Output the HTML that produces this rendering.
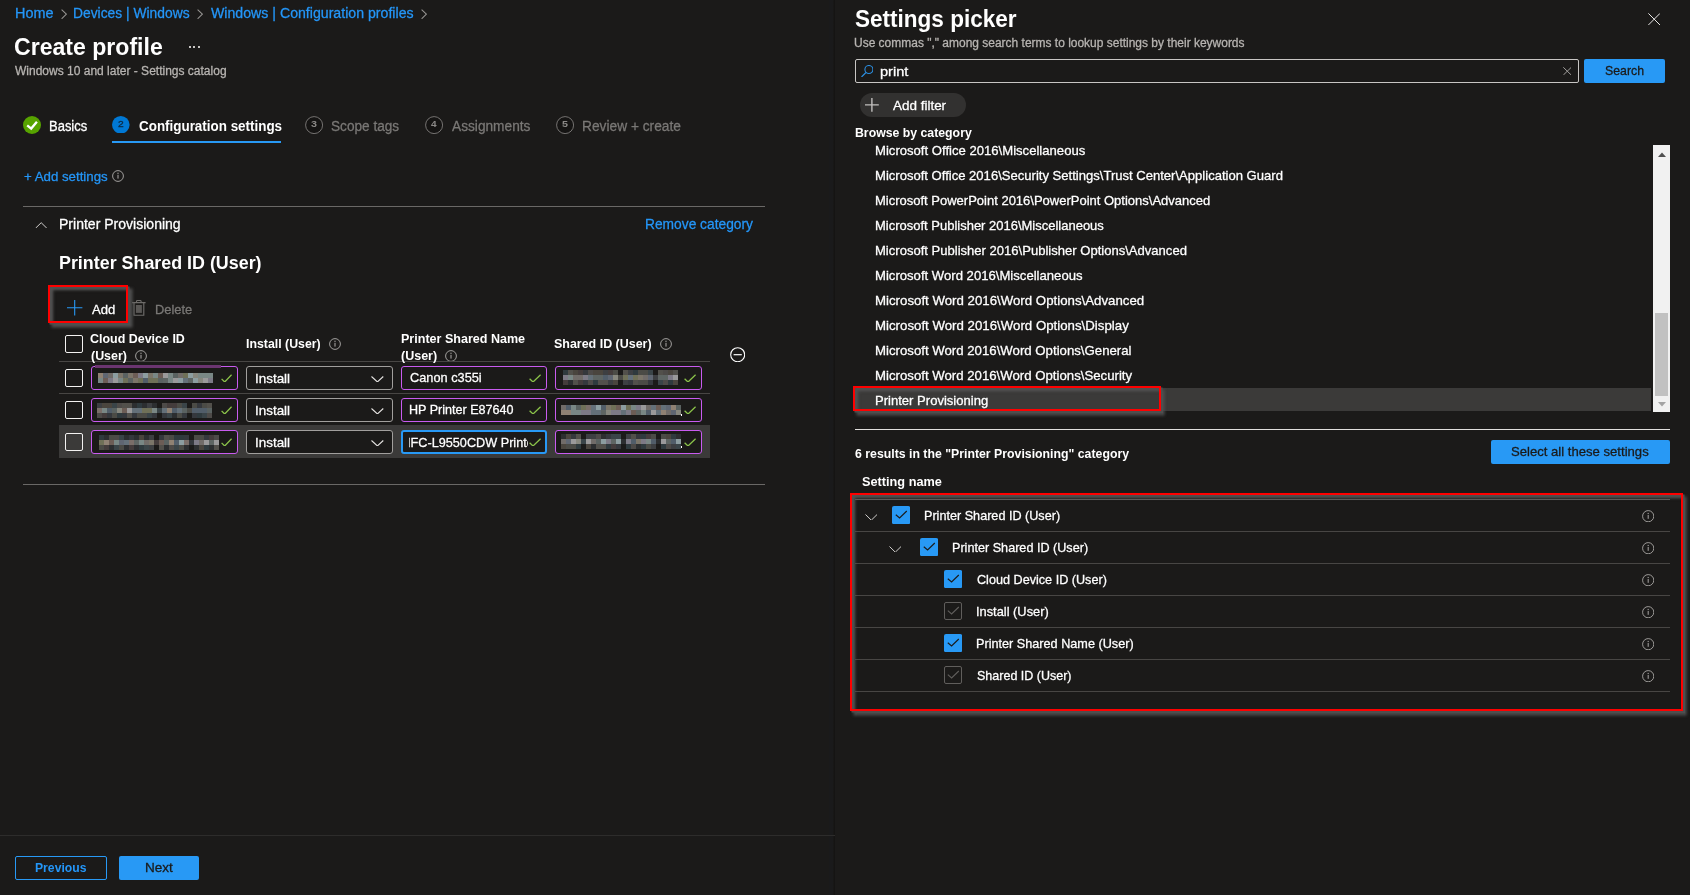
<!DOCTYPE html>
<html lang="en"><head><meta charset="utf-8"><title>Create profile - Settings picker</title>
<style>
html,body{margin:0;padding:0;}
body{width:1690px;height:895px;overflow:hidden;background:#1b1a19;font-family:"Liberation Sans", sans-serif;position:relative;}
.t{position:absolute;white-space:nowrap;line-height:1;transform-origin:0 50%;display:inline-block;}
.b{position:absolute;display:block;}
#tx{position:absolute;left:0;top:0;width:1690px;height:895px;will-change:transform;-webkit-text-stroke:0.28px;}
.red{border:2.4px solid #ff0000;box-sizing:border-box;box-shadow:1.5px 1.5px 0 #4e4e4e,3.6px 3.6px 3px 0.9px #505050,inset 3.2px 3.2px 2.6px #525252;}
#clip{position:absolute;left:409.4px;top:432px;width:118.6px;height:20px;overflow:hidden;}
#clip span{position:absolute;left:-8.931px;top:3.6px;font-size:13px;color:#fff;white-space:nowrap;line-height:1;transform-origin:0 50%;display:inline-block;transform:scaleX(0.9748);}
</style></head><body>
<svg class="b" style="left:61.0px;top:8.8px;" width="6" height="10.4" viewBox="0 0 6 10.4" fill="none"><path d="M0.6 0.6 L5.40 5.20 L0.6 9.80" stroke="#979593" stroke-width="1.05"/></svg>
<svg class="b" style="left:197.4px;top:8.8px;" width="6" height="10.4" viewBox="0 0 6 10.4" fill="none"><path d="M0.6 0.6 L5.40 5.20 L0.6 9.80" stroke="#979593" stroke-width="1.05"/></svg>
<svg class="b" style="left:421.4px;top:8.8px;" width="6" height="10.4" viewBox="0 0 6 10.4" fill="none"><path d="M0.6 0.6 L5.40 5.20 L0.6 9.80" stroke="#979593" stroke-width="1.05"/></svg>
<div class="b" style="left:188.7px;top:46px;width:1.9px;height:2.2px;background:#c8c6c4;"></div>
<div class="b" style="left:193.1px;top:46px;width:1.9px;height:2.2px;background:#c8c6c4;"></div>
<div class="b" style="left:197.7px;top:46px;width:1.9px;height:2.2px;background:#c8c6c4;"></div>
<svg class="b" style="left:23px;top:115.6px;" width="18" height="18" viewBox="0 0 18 18" fill="none"><circle cx="9" cy="9" r="9" fill="#57a300"/><path d="M4.2 9.3 L8.2 12.6 L13.9 5.8" stroke="#fff" stroke-width="2.3"/></svg>
<svg class="b" style="left:112.2px;top:115.8px;" width="17.6" height="17.6" viewBox="0 0 17.6 17.6" fill="none"><circle cx="8.8" cy="8.8" r="8.8" fill="#0078d4"/></svg>
<svg class="b" style="left:304.9px;top:115.6px;" width="18.2" height="18.2" viewBox="0 0 18.2 18.2" fill="none"><circle cx="9.1" cy="9.1" r="8.5" stroke="#767472" stroke-width="1" fill="#151413"/></svg>
<svg class="b" style="left:424.79999999999995px;top:115.6px;" width="18.2" height="18.2" viewBox="0 0 18.2 18.2" fill="none"><circle cx="9.1" cy="9.1" r="8.5" stroke="#767472" stroke-width="1" fill="#151413"/></svg>
<svg class="b" style="left:555.8px;top:115.6px;" width="18.2" height="18.2" viewBox="0 0 18.2 18.2" fill="none"><circle cx="9.1" cy="9.1" r="8.5" stroke="#767472" stroke-width="1" fill="#151413"/></svg>
<div class="b" style="left:112px;top:140.8px;width:169px;height:2.4px;background:#2899f5;"></div>
<svg class="b" style="left:112.0px;top:170.4px;" width="12" height="12" viewBox="0 0 12 12" fill="none"><circle cx="6.0" cy="6.0" r="5.4" stroke="#a19f9d" stroke-width="1"/><rect x="5.45" y="4.8" width="1.1" height="3.8" fill="#a19f9d"/><rect x="5.4" y="2.7" width="1.2" height="1.2" fill="#a19f9d"/></svg>
<div class="b" style="left:23px;top:206px;width:742px;height:1px;background:#6a6866;"></div>
<div class="b" style="left:23px;top:484px;width:742px;height:1px;background:#6a6866;"></div>
<svg class="b" style="left:34.9px;top:221.6px;" width="12.4" height="6.8" viewBox="0 0 12.4 6.8" fill="none"><path d="M0.5 6.30 L6.20 0.7 L11.90 6.30" stroke="#d2d0ce" stroke-width="1.0"/></svg>
<svg class="b" style="left:67.3px;top:300.3px;" width="15.4" height="15.4" viewBox="0 0 15.4 15.4" fill="none"><path d="M7.7 0 V15.4 M0 7.7 H15.4" stroke="#2899f5" stroke-width="1.1"/></svg>
<svg class="b" style="left:132.3px;top:300px;" width="13.8" height="16.2" viewBox="0 0 13.8 16.2" fill="none"><path d="M0 2.6 H13.6 M4.5 2.5 V1.3 Q4.5 0.55 5.3 0.55 H8.3 Q9.1 0.55 9.1 1.3 V2.5 M2 2.8 V15.3 H11.8 V2.8" stroke="#6e6c6a" stroke-width="1.15"/><rect x="3.9" y="5" width="6" height="7.9" fill="#5a5856"/></svg>
<div class="b red" style="left:48px;top:285px;width:80px;height:38px;"></div>
<div class="b" style="left:64.9px;top:334.8px;width:18.2px;height:18.2px;border:1.35px solid #f3f2f1;border-radius:2px;box-sizing:border-box;"></div>
<svg class="b" style="left:134.9px;top:349.8px;" width="12" height="12" viewBox="0 0 12 12" fill="none"><circle cx="6.0" cy="6.0" r="5.4" stroke="#a19f9d" stroke-width="1"/><rect x="5.45" y="4.8" width="1.1" height="3.8" fill="#a19f9d"/><rect x="5.4" y="2.7" width="1.2" height="1.2" fill="#a19f9d"/></svg>
<svg class="b" style="left:329.0px;top:338.0px;" width="12" height="12" viewBox="0 0 12 12" fill="none"><circle cx="6.0" cy="6.0" r="5.4" stroke="#a19f9d" stroke-width="1"/><rect x="5.45" y="4.8" width="1.1" height="3.8" fill="#a19f9d"/><rect x="5.4" y="2.7" width="1.2" height="1.2" fill="#a19f9d"/></svg>
<svg class="b" style="left:445.0px;top:350.0px;" width="12" height="12" viewBox="0 0 12 12" fill="none"><circle cx="6.0" cy="6.0" r="5.4" stroke="#a19f9d" stroke-width="1"/><rect x="5.45" y="4.8" width="1.1" height="3.8" fill="#a19f9d"/><rect x="5.4" y="2.7" width="1.2" height="1.2" fill="#a19f9d"/></svg>
<svg class="b" style="left:660.0px;top:338.0px;" width="12" height="12" viewBox="0 0 12 12" fill="none"><circle cx="6.0" cy="6.0" r="5.4" stroke="#a19f9d" stroke-width="1"/><rect x="5.45" y="4.8" width="1.1" height="3.8" fill="#a19f9d"/><rect x="5.4" y="2.7" width="1.2" height="1.2" fill="#a19f9d"/></svg>
<div class="b" style="left:59px;top:361px;width:651px;height:1px;background:#484644;"></div>
<div class="b" style="left:59px;top:393px;width:651px;height:1px;background:#484644;"></div>
<svg class="b" style="left:729.7px;top:346.7px;" width="15.4" height="15.4" viewBox="0 0 15.4 15.4" fill="none"><circle cx="7.7" cy="7.7" r="7" stroke="#fff" stroke-width="1.1"/><path d="M3.6 7.7 H11.8" stroke="#fff" stroke-width="1.2"/></svg>
<div class="b" style="left:59px;top:425px;width:651px;height:33px;background:#3b3a39;"></div>
<div class="b" style="left:64.9px;top:368.9px;width:18.2px;height:18.2px;border:1.35px solid #f3f2f1;border-radius:2px;box-sizing:border-box;"></div>
<div class="b" style="left:91px;top:366px;width:147px;height:24px;border:1px solid #c95bf0;border-radius:3px;box-sizing:border-box;background:#1b1a19;"></div>
<svg class="b" style="left:220.7px;top:373.6px;" width="11.2" height="8.8" viewBox="0 0 11.2 8.8" fill="none"><path d="M0.6 4.84 L3.70 8.00 L10.60 0.8" stroke="#8bc34a" stroke-width="1.3"/></svg>
<div class="b" style="left:246px;top:366px;width:147px;height:24px;border:1px solid #a19f9d;border-radius:3px;box-sizing:border-box;background:#1b1a19;"></div>
<svg class="b" style="left:371.20000000000005px;top:375.5px;" width="12.8" height="6.6" viewBox="0 0 12.8 6.6" fill="none"><path d="M0.5 0.5 L6.40 6.00 L12.30 0.5" stroke="#e6e4e2" stroke-width="1.05"/></svg>
<div class="b" style="left:401px;top:366px;width:146px;height:24px;border:1px solid #c95bf0;border-radius:3px;box-sizing:border-box;background:#1b1a19;"></div>
<svg class="b" style="left:528.7px;top:373.6px;" width="12.2" height="8.8" viewBox="0 0 12.2 8.8" fill="none"><path d="M0.6 4.84 L4.03 8.00 L11.60 0.8" stroke="#8bc34a" stroke-width="1.3"/></svg>
<div class="b" style="left:555px;top:366px;width:147px;height:24px;border:1px solid #c95bf0;border-radius:3px;box-sizing:border-box;background:#1b1a19;"></div>
<svg class="b" style="left:684px;top:373.6px;" width="12.2" height="8.8" viewBox="0 0 12.2 8.8" fill="none"><path d="M0.6 4.84 L4.03 8.00 L11.60 0.8" stroke="#8bc34a" stroke-width="1.3"/></svg>
<div class="b" style="left:64.9px;top:400.9px;width:18.2px;height:18.2px;border:1.35px solid #f3f2f1;border-radius:2px;box-sizing:border-box;"></div>
<div class="b" style="left:91px;top:398px;width:147px;height:24px;border:1px solid #c95bf0;border-radius:3px;box-sizing:border-box;background:#1b1a19;"></div>
<svg class="b" style="left:220.7px;top:405.6px;" width="11.2" height="8.8" viewBox="0 0 11.2 8.8" fill="none"><path d="M0.6 4.84 L3.70 8.00 L10.60 0.8" stroke="#8bc34a" stroke-width="1.3"/></svg>
<div class="b" style="left:246px;top:398px;width:147px;height:24px;border:1px solid #a19f9d;border-radius:3px;box-sizing:border-box;background:#1b1a19;"></div>
<svg class="b" style="left:371.20000000000005px;top:407.5px;" width="12.8" height="6.6" viewBox="0 0 12.8 6.6" fill="none"><path d="M0.5 0.5 L6.40 6.00 L12.30 0.5" stroke="#e6e4e2" stroke-width="1.05"/></svg>
<div class="b" style="left:401px;top:398px;width:146px;height:24px;border:1px solid #c95bf0;border-radius:3px;box-sizing:border-box;background:#1b1a19;"></div>
<svg class="b" style="left:528.7px;top:405.6px;" width="12.2" height="8.8" viewBox="0 0 12.2 8.8" fill="none"><path d="M0.6 4.84 L4.03 8.00 L11.60 0.8" stroke="#8bc34a" stroke-width="1.3"/></svg>
<div class="b" style="left:555px;top:398px;width:147px;height:24px;border:1px solid #c95bf0;border-radius:3px;box-sizing:border-box;background:#1b1a19;"></div>
<svg class="b" style="left:684px;top:405.6px;" width="12.2" height="8.8" viewBox="0 0 12.2 8.8" fill="none"><path d="M0.6 4.84 L4.03 8.00 L11.60 0.8" stroke="#8bc34a" stroke-width="1.3"/></svg>
<div class="b" style="left:64.9px;top:432.9px;width:18.2px;height:18.2px;border:1.35px solid #f3f2f1;border-radius:2px;box-sizing:border-box;background:#3b3a39;"></div>
<div class="b" style="left:91px;top:430px;width:147px;height:24px;border:1px solid #c95bf0;border-radius:3px;box-sizing:border-box;background:#1b1a19;"></div>
<svg class="b" style="left:220.7px;top:437.6px;" width="11.2" height="8.8" viewBox="0 0 11.2 8.8" fill="none"><path d="M0.6 4.84 L3.70 8.00 L10.60 0.8" stroke="#8bc34a" stroke-width="1.3"/></svg>
<div class="b" style="left:246px;top:430px;width:147px;height:24px;border:1px solid #a19f9d;border-radius:3px;box-sizing:border-box;background:#1b1a19;"></div>
<svg class="b" style="left:371.20000000000005px;top:439.5px;" width="12.8" height="6.6" viewBox="0 0 12.8 6.6" fill="none"><path d="M0.5 0.5 L6.40 6.00 L12.30 0.5" stroke="#e6e4e2" stroke-width="1.05"/></svg>
<div class="b" style="left:401px;top:430px;width:146px;height:24px;border:2px solid #2899f5;border-radius:3px;box-sizing:border-box;background:#1b1a19;"></div>
<svg class="b" style="left:528.7px;top:437.6px;" width="12.2" height="8.8" viewBox="0 0 12.2 8.8" fill="none"><path d="M0.6 4.84 L4.03 8.00 L11.60 0.8" stroke="#8bc34a" stroke-width="1.3"/></svg>
<div class="b" style="left:555px;top:430px;width:147px;height:24px;border:1px solid #c95bf0;border-radius:3px;box-sizing:border-box;background:#1b1a19;"></div>
<svg class="b" style="left:684px;top:437.6px;" width="12.2" height="8.8" viewBox="0 0 12.2 8.8" fill="none"><path d="M0.6 4.84 L4.03 8.00 L11.60 0.8" stroke="#8bc34a" stroke-width="1.3"/></svg>
<div class="b" style="left:95px;top:365px;width:126px;height:3px;background:#6b3570;"></div>
<div class="b" style="left:98px;top:373px;width:5px;height:5px;background:#8f8173;"></div><div class="b" style="left:103px;top:373px;width:5px;height:5px;background:#5f6672;"></div><div class="b" style="left:108px;top:373px;width:5px;height:5px;background:#716c69;"></div><div class="b" style="left:113px;top:373px;width:5px;height:5px;background:#8c9da0;"></div><div class="b" style="left:118px;top:373px;width:5px;height:5px;background:#7b7569;"></div><div class="b" style="left:123px;top:373px;width:5px;height:5px;background:#5a6261;"></div><div class="b" style="left:128px;top:373px;width:5px;height:5px;background:#7b7569;"></div><div class="b" style="left:133px;top:373px;width:5px;height:5px;background:#6c5d56;"></div><div class="b" style="left:138px;top:373px;width:5px;height:5px;background:#7d7a86;"></div><div class="b" style="left:143px;top:373px;width:5px;height:5px;background:#8c9da0;"></div><div class="b" style="left:148px;top:373px;width:5px;height:5px;background:#7b7569;"></div><div class="b" style="left:153px;top:373px;width:5px;height:5px;background:#798785;"></div><div class="b" style="left:158px;top:373px;width:5px;height:5px;background:#6c5d56;"></div><div class="b" style="left:163px;top:373px;width:5px;height:5px;background:#9a999a;"></div><div class="b" style="left:168px;top:373px;width:5px;height:5px;background:#798785;"></div><div class="b" style="left:173px;top:373px;width:5px;height:5px;background:#5a6261;"></div><div class="b" style="left:178px;top:373px;width:5px;height:5px;background:#716c69;"></div><div class="b" style="left:183px;top:373px;width:5px;height:5px;background:#6f7058;"></div><div class="b" style="left:188px;top:373px;width:5px;height:5px;background:#8c9da0;"></div><div class="b" style="left:193px;top:373px;width:5px;height:5px;background:#87877e;"></div><div class="b" style="left:198px;top:373px;width:5px;height:5px;background:#798785;"></div><div class="b" style="left:203px;top:373px;width:5px;height:5px;background:#798785;"></div><div class="b" style="left:208px;top:373px;width:5px;height:5px;background:#798785;"></div><div class="b" style="left:98px;top:378px;width:5px;height:5px;background:#798785;"></div><div class="b" style="left:103px;top:378px;width:5px;height:5px;background:#6c5d56;"></div><div class="b" style="left:108px;top:378px;width:5px;height:5px;background:#7d7a86;"></div><div class="b" style="left:113px;top:378px;width:5px;height:5px;background:#9a999a;"></div><div class="b" style="left:118px;top:378px;width:5px;height:5px;background:#798785;"></div><div class="b" style="left:123px;top:378px;width:5px;height:5px;background:#6f7058;"></div><div class="b" style="left:128px;top:378px;width:5px;height:5px;background:#5a6261;"></div><div class="b" style="left:133px;top:378px;width:5px;height:5px;background:#7b7569;"></div><div class="b" style="left:138px;top:378px;width:5px;height:5px;background:#6f7058;"></div><div class="b" style="left:143px;top:378px;width:5px;height:5px;background:#515d69;"></div><div class="b" style="left:148px;top:378px;width:5px;height:5px;background:#6f7058;"></div><div class="b" style="left:153px;top:378px;width:5px;height:5px;background:#6f7058;"></div><div class="b" style="left:158px;top:378px;width:5px;height:5px;background:#5a6261;"></div><div class="b" style="left:163px;top:378px;width:5px;height:5px;background:#5e6563;"></div><div class="b" style="left:168px;top:378px;width:5px;height:5px;background:#798785;"></div><div class="b" style="left:173px;top:378px;width:5px;height:5px;background:#9a999a;"></div><div class="b" style="left:178px;top:378px;width:5px;height:5px;background:#8c9da0;"></div><div class="b" style="left:183px;top:378px;width:5px;height:5px;background:#647079;"></div><div class="b" style="left:188px;top:378px;width:5px;height:5px;background:#5e6563;"></div><div class="b" style="left:193px;top:378px;width:5px;height:5px;background:#8c9da0;"></div><div class="b" style="left:198px;top:378px;width:5px;height:5px;background:#87877e;"></div><div class="b" style="left:203px;top:378px;width:5px;height:5px;background:#9a999a;"></div><div class="b" style="left:208px;top:378px;width:5px;height:5px;background:#7d7a86;"></div>
<div class="b" style="left:97px;top:403px;width:5px;height:5px;background:#3d3f42;"></div><div class="b" style="left:102px;top:403px;width:5px;height:5px;background:#4a453e;"></div><div class="b" style="left:107px;top:403px;width:5px;height:5px;background:#4a453e;"></div><div class="b" style="left:112px;top:403px;width:5px;height:5px;background:#3a4448;"></div><div class="b" style="left:117px;top:403px;width:5px;height:5px;background:#4d4a48;"></div><div class="b" style="left:122px;top:403px;width:5px;height:5px;background:#52504b;"></div><div class="b" style="left:127px;top:403px;width:5px;height:5px;background:#52504b;"></div><div class="b" style="left:132px;top:403px;width:5px;height:5px;background:#2c2e30;"></div><div class="b" style="left:137px;top:403px;width:5px;height:5px;background:#2f3a3e;"></div><div class="b" style="left:142px;top:403px;width:5px;height:5px;background:#2c2e30;"></div><div class="b" style="left:147px;top:403px;width:5px;height:5px;background:#3d3f42;"></div><div class="b" style="left:152px;top:403px;width:5px;height:5px;background:#2c2e30;"></div><div class="b" style="left:162px;top:403px;width:5px;height:5px;background:#4d4a48;"></div><div class="b" style="left:167px;top:403px;width:5px;height:5px;background:#443c3c;"></div><div class="b" style="left:172px;top:403px;width:5px;height:5px;background:#443c3c;"></div><div class="b" style="left:177px;top:403px;width:5px;height:5px;background:#4b4b46;"></div><div class="b" style="left:182px;top:403px;width:5px;height:5px;background:#3a4448;"></div><div class="b" style="left:192px;top:403px;width:5px;height:5px;background:#4b4b46;"></div><div class="b" style="left:197px;top:403px;width:5px;height:5px;background:#35383d;"></div><div class="b" style="left:202px;top:403px;width:5px;height:5px;background:#4b4b46;"></div><div class="b" style="left:207px;top:403px;width:5px;height:5px;background:#52504b;"></div><div class="b" style="left:97px;top:408px;width:5px;height:5px;background:#7a6e69;"></div><div class="b" style="left:102px;top:408px;width:5px;height:5px;background:#798785;"></div><div class="b" style="left:107px;top:408px;width:5px;height:5px;background:#515d69;"></div><div class="b" style="left:112px;top:408px;width:5px;height:5px;background:#5a6261;"></div><div class="b" style="left:117px;top:408px;width:5px;height:5px;background:#87877e;"></div><div class="b" style="left:122px;top:408px;width:5px;height:5px;background:#6c5d56;"></div><div class="b" style="left:127px;top:408px;width:5px;height:5px;background:#9a999a;"></div><div class="b" style="left:132px;top:408px;width:5px;height:5px;background:#647079;"></div><div class="b" style="left:137px;top:408px;width:5px;height:5px;background:#647079;"></div><div class="b" style="left:142px;top:408px;width:5px;height:5px;background:#6f7058;"></div><div class="b" style="left:147px;top:408px;width:5px;height:5px;background:#6f7058;"></div><div class="b" style="left:152px;top:408px;width:5px;height:5px;background:#798785;"></div><div class="b" style="left:157px;top:408px;width:5px;height:5px;background:#3a4448;"></div><div class="b" style="left:162px;top:408px;width:5px;height:5px;background:#647079;"></div><div class="b" style="left:167px;top:408px;width:5px;height:5px;background:#8f8173;"></div><div class="b" style="left:172px;top:408px;width:5px;height:5px;background:#515d69;"></div><div class="b" style="left:177px;top:408px;width:5px;height:5px;background:#647079;"></div><div class="b" style="left:182px;top:408px;width:5px;height:5px;background:#5a6261;"></div><div class="b" style="left:187px;top:408px;width:5px;height:5px;background:#4b4b46;"></div><div class="b" style="left:192px;top:408px;width:5px;height:5px;background:#515d69;"></div><div class="b" style="left:197px;top:408px;width:5px;height:5px;background:#515d69;"></div><div class="b" style="left:202px;top:408px;width:5px;height:5px;background:#515d69;"></div><div class="b" style="left:207px;top:408px;width:5px;height:5px;background:#5a6261;"></div><div class="b" style="left:97px;top:413px;width:5px;height:5px;background:#4d4a48;"></div><div class="b" style="left:102px;top:413px;width:5px;height:5px;background:#443c3c;"></div><div class="b" style="left:107px;top:413px;width:5px;height:5px;background:#35383d;"></div><div class="b" style="left:112px;top:413px;width:5px;height:5px;background:#4b4b46;"></div><div class="b" style="left:117px;top:413px;width:5px;height:5px;background:#2f3a3e;"></div><div class="b" style="left:122px;top:413px;width:5px;height:5px;background:#35383d;"></div><div class="b" style="left:127px;top:413px;width:5px;height:5px;background:#52504b;"></div><div class="b" style="left:132px;top:413px;width:5px;height:5px;background:#35383d;"></div><div class="b" style="left:137px;top:413px;width:5px;height:5px;background:#4b4b46;"></div><div class="b" style="left:142px;top:413px;width:5px;height:5px;background:#4b4b46;"></div><div class="b" style="left:147px;top:413px;width:5px;height:5px;background:#3a4448;"></div><div class="b" style="left:152px;top:413px;width:5px;height:5px;background:#35383d;"></div><div class="b" style="left:162px;top:413px;width:5px;height:5px;background:#35383d;"></div><div class="b" style="left:167px;top:413px;width:5px;height:5px;background:#3a4448;"></div><div class="b" style="left:172px;top:413px;width:5px;height:5px;background:#2c2e30;"></div><div class="b" style="left:177px;top:413px;width:5px;height:5px;background:#4b4b46;"></div><div class="b" style="left:182px;top:413px;width:5px;height:5px;background:#35383d;"></div><div class="b" style="left:192px;top:413px;width:5px;height:5px;background:#35383d;"></div><div class="b" style="left:197px;top:413px;width:5px;height:5px;background:#2f3a3e;"></div><div class="b" style="left:202px;top:413px;width:5px;height:5px;background:#3a4448;"></div><div class="b" style="left:207px;top:413px;width:5px;height:5px;background:#4d4a48;"></div>
<div class="b" style="left:99px;top:435px;width:5px;height:5px;background:#2f3a3e;"></div><div class="b" style="left:104px;top:435px;width:5px;height:5px;background:#2c2e30;"></div><div class="b" style="left:109px;top:435px;width:5px;height:5px;background:#4b4b46;"></div><div class="b" style="left:114px;top:435px;width:5px;height:5px;background:#4d4a48;"></div><div class="b" style="left:119px;top:435px;width:5px;height:5px;background:#3a4448;"></div><div class="b" style="left:124px;top:435px;width:5px;height:5px;background:#2c2e30;"></div><div class="b" style="left:129px;top:435px;width:5px;height:5px;background:#35383d;"></div><div class="b" style="left:134px;top:435px;width:5px;height:5px;background:#2c2e30;"></div><div class="b" style="left:139px;top:435px;width:5px;height:5px;background:#4a453e;"></div><div class="b" style="left:144px;top:435px;width:5px;height:5px;background:#2c2e30;"></div><div class="b" style="left:149px;top:435px;width:5px;height:5px;background:#3d3f42;"></div><div class="b" style="left:159px;top:435px;width:5px;height:5px;background:#35383d;"></div><div class="b" style="left:164px;top:435px;width:5px;height:5px;background:#52504b;"></div><div class="b" style="left:169px;top:435px;width:5px;height:5px;background:#4b4b46;"></div><div class="b" style="left:174px;top:435px;width:5px;height:5px;background:#2f3a3e;"></div><div class="b" style="left:179px;top:435px;width:5px;height:5px;background:#2f3a3e;"></div><div class="b" style="left:184px;top:435px;width:5px;height:5px;background:#35383d;"></div><div class="b" style="left:194px;top:435px;width:5px;height:5px;background:#4b4b46;"></div><div class="b" style="left:199px;top:435px;width:5px;height:5px;background:#4b4b46;"></div><div class="b" style="left:204px;top:435px;width:5px;height:5px;background:#35383d;"></div><div class="b" style="left:209px;top:435px;width:5px;height:5px;background:#443c3c;"></div><div class="b" style="left:214px;top:435px;width:5px;height:5px;background:#4d4a48;"></div><div class="b" style="left:99px;top:440px;width:5px;height:5px;background:#6f7058;"></div><div class="b" style="left:104px;top:440px;width:5px;height:5px;background:#8f8173;"></div><div class="b" style="left:109px;top:440px;width:5px;height:5px;background:#6c5d56;"></div><div class="b" style="left:114px;top:440px;width:5px;height:5px;background:#798785;"></div><div class="b" style="left:119px;top:440px;width:5px;height:5px;background:#5f6672;"></div><div class="b" style="left:124px;top:440px;width:5px;height:5px;background:#647079;"></div><div class="b" style="left:129px;top:440px;width:5px;height:5px;background:#7a6e69;"></div><div class="b" style="left:134px;top:440px;width:5px;height:5px;background:#5e6563;"></div><div class="b" style="left:139px;top:440px;width:5px;height:5px;background:#798785;"></div><div class="b" style="left:144px;top:440px;width:5px;height:5px;background:#716c69;"></div><div class="b" style="left:149px;top:440px;width:5px;height:5px;background:#7b7569;"></div><div class="b" style="left:154px;top:440px;width:5px;height:5px;background:#443c3c;"></div><div class="b" style="left:159px;top:440px;width:5px;height:5px;background:#6c5d56;"></div><div class="b" style="left:164px;top:440px;width:5px;height:5px;background:#5a6261;"></div><div class="b" style="left:169px;top:440px;width:5px;height:5px;background:#8f8173;"></div><div class="b" style="left:174px;top:440px;width:5px;height:5px;background:#515d69;"></div><div class="b" style="left:179px;top:440px;width:5px;height:5px;background:#8c9da0;"></div><div class="b" style="left:184px;top:440px;width:5px;height:5px;background:#7a6e69;"></div><div class="b" style="left:189px;top:440px;width:5px;height:5px;background:#35383d;"></div><div class="b" style="left:194px;top:440px;width:5px;height:5px;background:#7d7a86;"></div><div class="b" style="left:199px;top:440px;width:5px;height:5px;background:#716c69;"></div><div class="b" style="left:204px;top:440px;width:5px;height:5px;background:#9a999a;"></div><div class="b" style="left:209px;top:440px;width:5px;height:5px;background:#5e6563;"></div><div class="b" style="left:214px;top:440px;width:5px;height:5px;background:#9a999a;"></div><div class="b" style="left:99px;top:445px;width:5px;height:5px;background:#4b4b46;"></div><div class="b" style="left:104px;top:445px;width:5px;height:5px;background:#443c3c;"></div><div class="b" style="left:109px;top:445px;width:5px;height:5px;background:#2c2e30;"></div><div class="b" style="left:114px;top:445px;width:5px;height:5px;background:#3a4448;"></div><div class="b" style="left:119px;top:445px;width:5px;height:5px;background:#4b4b46;"></div><div class="b" style="left:124px;top:445px;width:5px;height:5px;background:#2c2e30;"></div><div class="b" style="left:129px;top:445px;width:5px;height:5px;background:#443c3c;"></div><div class="b" style="left:134px;top:445px;width:5px;height:5px;background:#2c2e30;"></div><div class="b" style="left:139px;top:445px;width:5px;height:5px;background:#2f3a3e;"></div><div class="b" style="left:144px;top:445px;width:5px;height:5px;background:#3a4448;"></div><div class="b" style="left:149px;top:445px;width:5px;height:5px;background:#3d3f42;"></div><div class="b" style="left:159px;top:445px;width:5px;height:5px;background:#52504b;"></div><div class="b" style="left:164px;top:445px;width:5px;height:5px;background:#2c2e30;"></div><div class="b" style="left:169px;top:445px;width:5px;height:5px;background:#4d4a48;"></div><div class="b" style="left:174px;top:445px;width:5px;height:5px;background:#3a4448;"></div><div class="b" style="left:179px;top:445px;width:5px;height:5px;background:#4b4b46;"></div><div class="b" style="left:184px;top:445px;width:5px;height:5px;background:#2c2e30;"></div><div class="b" style="left:194px;top:445px;width:5px;height:5px;background:#2c2e30;"></div><div class="b" style="left:199px;top:445px;width:5px;height:5px;background:#4a453e;"></div><div class="b" style="left:204px;top:445px;width:5px;height:5px;background:#2f3a3e;"></div><div class="b" style="left:209px;top:445px;width:5px;height:5px;background:#2c2e30;"></div><div class="b" style="left:214px;top:445px;width:5px;height:5px;background:#52504b;"></div>
<div class="b" style="left:563px;top:370px;width:5px;height:5px;background:#2f3a3e;"></div><div class="b" style="left:568px;top:370px;width:5px;height:5px;background:#52504b;"></div><div class="b" style="left:573px;top:370px;width:5px;height:5px;background:#4a453e;"></div><div class="b" style="left:578px;top:370px;width:5px;height:5px;background:#443c3c;"></div><div class="b" style="left:583px;top:370px;width:5px;height:5px;background:#35383d;"></div><div class="b" style="left:588px;top:370px;width:5px;height:5px;background:#4d4a48;"></div><div class="b" style="left:593px;top:370px;width:5px;height:5px;background:#4a453e;"></div><div class="b" style="left:598px;top:370px;width:5px;height:5px;background:#4a453e;"></div><div class="b" style="left:603px;top:370px;width:5px;height:5px;background:#3d3f42;"></div><div class="b" style="left:608px;top:370px;width:5px;height:5px;background:#443c3c;"></div><div class="b" style="left:613px;top:370px;width:5px;height:5px;background:#4b4b46;"></div><div class="b" style="left:623px;top:370px;width:5px;height:5px;background:#52504b;"></div><div class="b" style="left:628px;top:370px;width:5px;height:5px;background:#3d3f42;"></div><div class="b" style="left:633px;top:370px;width:5px;height:5px;background:#2f3a3e;"></div><div class="b" style="left:638px;top:370px;width:5px;height:5px;background:#4b4b46;"></div><div class="b" style="left:643px;top:370px;width:5px;height:5px;background:#4b4b46;"></div><div class="b" style="left:648px;top:370px;width:5px;height:5px;background:#3a4448;"></div><div class="b" style="left:658px;top:370px;width:5px;height:5px;background:#52504b;"></div><div class="b" style="left:663px;top:370px;width:5px;height:5px;background:#4d4a48;"></div><div class="b" style="left:668px;top:370px;width:5px;height:5px;background:#4a453e;"></div><div class="b" style="left:673px;top:370px;width:5px;height:5px;background:#52504b;"></div><div class="b" style="left:563px;top:375px;width:5px;height:5px;background:#7d7a86;"></div><div class="b" style="left:568px;top:375px;width:5px;height:5px;background:#798785;"></div><div class="b" style="left:573px;top:375px;width:5px;height:5px;background:#716c69;"></div><div class="b" style="left:578px;top:375px;width:5px;height:5px;background:#716c69;"></div><div class="b" style="left:583px;top:375px;width:5px;height:5px;background:#7d7a86;"></div><div class="b" style="left:588px;top:375px;width:5px;height:5px;background:#647079;"></div><div class="b" style="left:593px;top:375px;width:5px;height:5px;background:#5e6563;"></div><div class="b" style="left:598px;top:375px;width:5px;height:5px;background:#5e6563;"></div><div class="b" style="left:603px;top:375px;width:5px;height:5px;background:#515d69;"></div><div class="b" style="left:608px;top:375px;width:5px;height:5px;background:#5f6672;"></div><div class="b" style="left:613px;top:375px;width:5px;height:5px;background:#87877e;"></div><div class="b" style="left:618px;top:375px;width:5px;height:5px;background:#4b4b46;"></div><div class="b" style="left:623px;top:375px;width:5px;height:5px;background:#6f7058;"></div><div class="b" style="left:628px;top:375px;width:5px;height:5px;background:#647079;"></div><div class="b" style="left:633px;top:375px;width:5px;height:5px;background:#6f7058;"></div><div class="b" style="left:638px;top:375px;width:5px;height:5px;background:#7b7569;"></div><div class="b" style="left:643px;top:375px;width:5px;height:5px;background:#716c69;"></div><div class="b" style="left:648px;top:375px;width:5px;height:5px;background:#5f6672;"></div><div class="b" style="left:653px;top:375px;width:5px;height:5px;background:#3d3f42;"></div><div class="b" style="left:658px;top:375px;width:5px;height:5px;background:#5e6563;"></div><div class="b" style="left:663px;top:375px;width:5px;height:5px;background:#5e6563;"></div><div class="b" style="left:668px;top:375px;width:5px;height:5px;background:#7d7a86;"></div><div class="b" style="left:673px;top:375px;width:5px;height:5px;background:#9a999a;"></div><div class="b" style="left:563px;top:380px;width:5px;height:5px;background:#443c3c;"></div><div class="b" style="left:568px;top:380px;width:5px;height:5px;background:#2c2e30;"></div><div class="b" style="left:573px;top:380px;width:5px;height:5px;background:#52504b;"></div><div class="b" style="left:578px;top:380px;width:5px;height:5px;background:#443c3c;"></div><div class="b" style="left:583px;top:380px;width:5px;height:5px;background:#35383d;"></div><div class="b" style="left:588px;top:380px;width:5px;height:5px;background:#4d4a48;"></div><div class="b" style="left:593px;top:380px;width:5px;height:5px;background:#2f3a3e;"></div><div class="b" style="left:598px;top:380px;width:5px;height:5px;background:#52504b;"></div><div class="b" style="left:603px;top:380px;width:5px;height:5px;background:#52504b;"></div><div class="b" style="left:608px;top:380px;width:5px;height:5px;background:#3d3f42;"></div><div class="b" style="left:613px;top:380px;width:5px;height:5px;background:#4a453e;"></div><div class="b" style="left:623px;top:380px;width:5px;height:5px;background:#3d3f42;"></div><div class="b" style="left:628px;top:380px;width:5px;height:5px;background:#35383d;"></div><div class="b" style="left:633px;top:380px;width:5px;height:5px;background:#52504b;"></div><div class="b" style="left:638px;top:380px;width:5px;height:5px;background:#4b4b46;"></div><div class="b" style="left:643px;top:380px;width:5px;height:5px;background:#4b4b46;"></div><div class="b" style="left:648px;top:380px;width:5px;height:5px;background:#35383d;"></div><div class="b" style="left:658px;top:380px;width:5px;height:5px;background:#3a4448;"></div><div class="b" style="left:663px;top:380px;width:5px;height:5px;background:#4d4a48;"></div><div class="b" style="left:668px;top:380px;width:5px;height:5px;background:#2f3a3e;"></div><div class="b" style="left:673px;top:380px;width:5px;height:5px;background:#4a453e;"></div>
<div class="b" style="left:561px;top:405px;width:5px;height:5px;background:#716c69;"></div><div class="b" style="left:566px;top:405px;width:5px;height:5px;background:#515d69;"></div><div class="b" style="left:571px;top:405px;width:5px;height:5px;background:#798785;"></div><div class="b" style="left:576px;top:405px;width:5px;height:5px;background:#5a6261;"></div><div class="b" style="left:581px;top:405px;width:5px;height:5px;background:#6f7058;"></div><div class="b" style="left:586px;top:405px;width:5px;height:5px;background:#7a6e69;"></div><div class="b" style="left:591px;top:405px;width:5px;height:5px;background:#647079;"></div><div class="b" style="left:596px;top:405px;width:5px;height:5px;background:#8c9da0;"></div><div class="b" style="left:601px;top:405px;width:5px;height:5px;background:#515d69;"></div><div class="b" style="left:606px;top:405px;width:5px;height:5px;background:#7b7569;"></div><div class="b" style="left:611px;top:405px;width:5px;height:5px;background:#6f7058;"></div><div class="b" style="left:616px;top:405px;width:5px;height:5px;background:#6c5d56;"></div><div class="b" style="left:621px;top:405px;width:5px;height:5px;background:#8c9da0;"></div><div class="b" style="left:626px;top:405px;width:5px;height:5px;background:#6f7058;"></div><div class="b" style="left:631px;top:405px;width:5px;height:5px;background:#798785;"></div><div class="b" style="left:636px;top:405px;width:5px;height:5px;background:#7d7a86;"></div><div class="b" style="left:641px;top:405px;width:5px;height:5px;background:#9a999a;"></div><div class="b" style="left:646px;top:405px;width:5px;height:5px;background:#716c69;"></div><div class="b" style="left:651px;top:405px;width:5px;height:5px;background:#647079;"></div><div class="b" style="left:656px;top:405px;width:5px;height:5px;background:#6c5d56;"></div><div class="b" style="left:661px;top:405px;width:5px;height:5px;background:#647079;"></div><div class="b" style="left:666px;top:405px;width:5px;height:5px;background:#5f6672;"></div><div class="b" style="left:671px;top:405px;width:5px;height:5px;background:#8f8173;"></div><div class="b" style="left:676px;top:405px;width:5px;height:5px;background:#5a6261;"></div><div class="b" style="left:561px;top:410px;width:5px;height:5px;background:#8f8173;"></div><div class="b" style="left:566px;top:410px;width:5px;height:5px;background:#8f8173;"></div><div class="b" style="left:571px;top:410px;width:5px;height:5px;background:#798785;"></div><div class="b" style="left:576px;top:410px;width:5px;height:5px;background:#798785;"></div><div class="b" style="left:581px;top:410px;width:5px;height:5px;background:#7d7a86;"></div><div class="b" style="left:586px;top:410px;width:5px;height:5px;background:#7d7a86;"></div><div class="b" style="left:591px;top:410px;width:5px;height:5px;background:#647079;"></div><div class="b" style="left:596px;top:410px;width:5px;height:5px;background:#647079;"></div><div class="b" style="left:601px;top:410px;width:5px;height:5px;background:#5e6563;"></div><div class="b" style="left:606px;top:410px;width:5px;height:5px;background:#87877e;"></div><div class="b" style="left:611px;top:410px;width:5px;height:5px;background:#7d7a86;"></div><div class="b" style="left:616px;top:410px;width:5px;height:5px;background:#7d7a86;"></div><div class="b" style="left:621px;top:410px;width:5px;height:5px;background:#647079;"></div><div class="b" style="left:626px;top:410px;width:5px;height:5px;background:#7d7a86;"></div><div class="b" style="left:631px;top:410px;width:5px;height:5px;background:#6c5d56;"></div><div class="b" style="left:636px;top:410px;width:5px;height:5px;background:#5e6563;"></div><div class="b" style="left:641px;top:410px;width:5px;height:5px;background:#798785;"></div><div class="b" style="left:646px;top:410px;width:5px;height:5px;background:#515d69;"></div><div class="b" style="left:651px;top:410px;width:5px;height:5px;background:#9a999a;"></div><div class="b" style="left:656px;top:410px;width:5px;height:5px;background:#647079;"></div><div class="b" style="left:661px;top:410px;width:5px;height:5px;background:#8f8173;"></div><div class="b" style="left:666px;top:410px;width:5px;height:5px;background:#716c69;"></div><div class="b" style="left:671px;top:410px;width:5px;height:5px;background:#5f6672;"></div><div class="b" style="left:676px;top:410px;width:5px;height:5px;background:#87877e;"></div>
<div class="b" style="left:561px;top:434px;width:5px;height:5px;background:#2c2e30;"></div><div class="b" style="left:566px;top:434px;width:5px;height:5px;background:#4a453e;"></div><div class="b" style="left:571px;top:434px;width:5px;height:5px;background:#35383d;"></div><div class="b" style="left:576px;top:434px;width:5px;height:5px;background:#52504b;"></div><div class="b" style="left:586px;top:434px;width:5px;height:5px;background:#3d3f42;"></div><div class="b" style="left:591px;top:434px;width:5px;height:5px;background:#3d3f42;"></div><div class="b" style="left:596px;top:434px;width:5px;height:5px;background:#4d4a48;"></div><div class="b" style="left:601px;top:434px;width:5px;height:5px;background:#2c2e30;"></div><div class="b" style="left:606px;top:434px;width:5px;height:5px;background:#35383d;"></div><div class="b" style="left:611px;top:434px;width:5px;height:5px;background:#3a4448;"></div><div class="b" style="left:616px;top:434px;width:5px;height:5px;background:#3a4448;"></div><div class="b" style="left:626px;top:434px;width:5px;height:5px;background:#3d3f42;"></div><div class="b" style="left:631px;top:434px;width:5px;height:5px;background:#52504b;"></div><div class="b" style="left:636px;top:434px;width:5px;height:5px;background:#35383d;"></div><div class="b" style="left:641px;top:434px;width:5px;height:5px;background:#2f3a3e;"></div><div class="b" style="left:646px;top:434px;width:5px;height:5px;background:#443c3c;"></div><div class="b" style="left:651px;top:434px;width:5px;height:5px;background:#4b4b46;"></div><div class="b" style="left:661px;top:434px;width:5px;height:5px;background:#4b4b46;"></div><div class="b" style="left:666px;top:434px;width:5px;height:5px;background:#4a453e;"></div><div class="b" style="left:671px;top:434px;width:5px;height:5px;background:#2f3a3e;"></div><div class="b" style="left:676px;top:434px;width:5px;height:5px;background:#2c2e30;"></div><div class="b" style="left:561px;top:439px;width:5px;height:5px;background:#716c69;"></div><div class="b" style="left:566px;top:439px;width:5px;height:5px;background:#5f6672;"></div><div class="b" style="left:571px;top:439px;width:5px;height:5px;background:#9a999a;"></div><div class="b" style="left:576px;top:439px;width:5px;height:5px;background:#87877e;"></div><div class="b" style="left:581px;top:439px;width:5px;height:5px;background:#3a4448;"></div><div class="b" style="left:586px;top:439px;width:5px;height:5px;background:#9a999a;"></div><div class="b" style="left:591px;top:439px;width:5px;height:5px;background:#716c69;"></div><div class="b" style="left:596px;top:439px;width:5px;height:5px;background:#5a6261;"></div><div class="b" style="left:601px;top:439px;width:5px;height:5px;background:#8c9da0;"></div><div class="b" style="left:606px;top:439px;width:5px;height:5px;background:#7d7a86;"></div><div class="b" style="left:611px;top:439px;width:5px;height:5px;background:#5e6563;"></div><div class="b" style="left:616px;top:439px;width:5px;height:5px;background:#8c9da0;"></div><div class="b" style="left:621px;top:439px;width:5px;height:5px;background:#2c2e30;"></div><div class="b" style="left:626px;top:439px;width:5px;height:5px;background:#7d7a86;"></div><div class="b" style="left:631px;top:439px;width:5px;height:5px;background:#515d69;"></div><div class="b" style="left:636px;top:439px;width:5px;height:5px;background:#7b7569;"></div><div class="b" style="left:641px;top:439px;width:5px;height:5px;background:#7d7a86;"></div><div class="b" style="left:646px;top:439px;width:5px;height:5px;background:#798785;"></div><div class="b" style="left:651px;top:439px;width:5px;height:5px;background:#515d69;"></div><div class="b" style="left:656px;top:439px;width:5px;height:5px;background:#2c2e30;"></div><div class="b" style="left:661px;top:439px;width:5px;height:5px;background:#9a999a;"></div><div class="b" style="left:666px;top:439px;width:5px;height:5px;background:#5e6563;"></div><div class="b" style="left:671px;top:439px;width:5px;height:5px;background:#515d69;"></div><div class="b" style="left:676px;top:439px;width:5px;height:5px;background:#8c9da0;"></div><div class="b" style="left:561px;top:444px;width:5px;height:5px;background:#4a453e;"></div><div class="b" style="left:566px;top:444px;width:5px;height:5px;background:#4b4b46;"></div><div class="b" style="left:571px;top:444px;width:5px;height:5px;background:#4b4b46;"></div><div class="b" style="left:576px;top:444px;width:5px;height:5px;background:#2f3a3e;"></div><div class="b" style="left:586px;top:444px;width:5px;height:5px;background:#4a453e;"></div><div class="b" style="left:591px;top:444px;width:5px;height:5px;background:#2c2e30;"></div><div class="b" style="left:596px;top:444px;width:5px;height:5px;background:#52504b;"></div><div class="b" style="left:601px;top:444px;width:5px;height:5px;background:#52504b;"></div><div class="b" style="left:606px;top:444px;width:5px;height:5px;background:#2f3a3e;"></div><div class="b" style="left:611px;top:444px;width:5px;height:5px;background:#443c3c;"></div><div class="b" style="left:616px;top:444px;width:5px;height:5px;background:#35383d;"></div><div class="b" style="left:626px;top:444px;width:5px;height:5px;background:#2f3a3e;"></div><div class="b" style="left:631px;top:444px;width:5px;height:5px;background:#4d4a48;"></div><div class="b" style="left:636px;top:444px;width:5px;height:5px;background:#2c2e30;"></div><div class="b" style="left:641px;top:444px;width:5px;height:5px;background:#2f3a3e;"></div><div class="b" style="left:646px;top:444px;width:5px;height:5px;background:#4b4b46;"></div><div class="b" style="left:651px;top:444px;width:5px;height:5px;background:#3d3f42;"></div><div class="b" style="left:661px;top:444px;width:5px;height:5px;background:#2f3a3e;"></div><div class="b" style="left:666px;top:444px;width:5px;height:5px;background:#4d4a48;"></div><div class="b" style="left:671px;top:444px;width:5px;height:5px;background:#3d3f42;"></div><div class="b" style="left:676px;top:444px;width:5px;height:5px;background:#3a4448;"></div>
<div class="b" style="left:680.5px;top:414px;width:1.6px;height:1.6px;background:#fff;"></div>
<div class="b" style="left:680.5px;top:446px;width:1.6px;height:1.6px;background:#fff;"></div>
<div class="b" style="left:15px;top:856px;width:92px;height:24px;border:1px solid #2899f5;border-radius:2px;box-sizing:border-box;"></div>
<div class="b" style="left:119px;top:856px;width:80px;height:24px;background:#2899f5;border-radius:2px;"></div>
<div class="b" style="left:829px;top:0px;width:4px;height:895px;background:#1a1a1b;"></div>
<div class="b" style="left:833px;top:0px;width:2px;height:895px;background:linear-gradient(90deg,rgba(0,0,0,.05),rgba(0,0,0,.3));"></div>
<div class="b" style="left:0px;top:835px;width:835px;height:1px;background:#2d2c2b;"></div>
<svg class="b" style="left:1647.9px;top:13px;" width="12.4" height="12.4" viewBox="0 0 12.4 12.4" fill="none"><path d="M0.4 0.4 L12 12 M12 0.4 L0.4 12" stroke="#f3f2f1" stroke-width="0.95"/></svg>
<div class="b" style="left:855px;top:59px;width:724px;height:24px;border:1px solid #c8c6c4;border-radius:2px;box-sizing:border-box;"></div>
<svg class="b" style="left:860.8px;top:65px;" width="12.6" height="12.4" viewBox="0 0 12.6 12.4" fill="none"><circle cx="7.9" cy="4.5" r="4.0" stroke="#2b8ee0" stroke-width="1.1"/><path d="M5 7.5 L0.5 12" stroke="#2b8ee0" stroke-width="1.2"/></svg>
<svg class="b" style="left:1562.7px;top:66.8px;" width="8.6" height="8.4" viewBox="0 0 8.6 8.4" fill="none"><path d="M0.3 0.3 L8.3 8.1 M8.3 0.3 L0.3 8.1" stroke="#a19f9d" stroke-width="1"/></svg>
<div class="b" style="left:1584px;top:59px;width:81px;height:24px;background:#2899f5;border-radius:2px;"></div>
<div class="b" style="left:860px;top:93px;width:106px;height:24px;background:#323130;border-radius:12px;"></div>
<svg class="b" style="left:865.3px;top:98px;" width="13.8" height="13.8" viewBox="0 0 13.8 13.8" fill="none"><path d="M6.9 0 V13.8 M0 6.9 H13.8" stroke="#c0bebc" stroke-width="1.4"/></svg>
<div class="b" style="left:855px;top:388px;width:796px;height:22.6px;background:#3b3a39;"></div>
<div class="b" style="left:1653px;top:145px;width:17px;height:267.4px;background:#f1f1f1;"></div>
<div class="b" style="left:1655.2px;top:313px;width:13px;height:83px;background:#c1c1c1;"></div>
<svg class="b" style="left:1657.5px;top:151.5px;" width="8" height="5" viewBox="0 0 8 5" fill="none"><path d="M0 5 L4 0.6 L8 5 Z" fill="#505050"/></svg>
<svg class="b" style="left:1657.5px;top:401.5px;" width="8" height="5" viewBox="0 0 8 5" fill="none"><path d="M0 0 L4 4.4 L8 0 Z" fill="#a3a3a3"/></svg>
<div class="b red" style="left:853px;top:386px;width:308px;height:25px;"></div>
<div class="b" style="left:855px;top:429px;width:815px;height:1px;background:#e1dfdd;"></div>
<div class="b" style="left:1491px;top:440px;width:179px;height:24px;background:#2899f5;border-radius:2px;"></div>
<div class="b" style="left:855px;top:499px;width:815px;height:1px;background:#605e5c;"></div>
<div class="b" style="left:855px;top:531px;width:815px;height:1px;background:#484644;"></div>
<div class="b" style="left:855px;top:563px;width:815px;height:1px;background:#484644;"></div>
<div class="b" style="left:855px;top:595px;width:815px;height:1px;background:#484644;"></div>
<div class="b" style="left:855px;top:627px;width:815px;height:1px;background:#484644;"></div>
<div class="b" style="left:855px;top:659px;width:815px;height:1px;background:#484644;"></div>
<div class="b" style="left:855px;top:691px;width:815px;height:1px;background:#484644;"></div>
<svg class="b" style="left:1641.8999999999999px;top:509.8px;" width="12.4" height="12.4" viewBox="0 0 12.4 12.4" fill="none"><circle cx="6.2" cy="6.2" r="5.6000000000000005" stroke="#9c9a98" stroke-width="1"/><rect x="5.65" y="5.0" width="1.1" height="3.8" fill="#9c9a98"/><rect x="5.6000000000000005" y="2.9000000000000004" width="1.2" height="1.2" fill="#9c9a98"/></svg>
<svg class="b" style="left:1641.8999999999999px;top:541.8px;" width="12.4" height="12.4" viewBox="0 0 12.4 12.4" fill="none"><circle cx="6.2" cy="6.2" r="5.6000000000000005" stroke="#9c9a98" stroke-width="1"/><rect x="5.65" y="5.0" width="1.1" height="3.8" fill="#9c9a98"/><rect x="5.6000000000000005" y="2.9000000000000004" width="1.2" height="1.2" fill="#9c9a98"/></svg>
<svg class="b" style="left:1641.8999999999999px;top:573.8px;" width="12.4" height="12.4" viewBox="0 0 12.4 12.4" fill="none"><circle cx="6.2" cy="6.2" r="5.6000000000000005" stroke="#9c9a98" stroke-width="1"/><rect x="5.65" y="5.0" width="1.1" height="3.8" fill="#9c9a98"/><rect x="5.6000000000000005" y="2.9000000000000004" width="1.2" height="1.2" fill="#9c9a98"/></svg>
<svg class="b" style="left:1641.8999999999999px;top:605.8px;" width="12.4" height="12.4" viewBox="0 0 12.4 12.4" fill="none"><circle cx="6.2" cy="6.2" r="5.6000000000000005" stroke="#9c9a98" stroke-width="1"/><rect x="5.65" y="5.0" width="1.1" height="3.8" fill="#9c9a98"/><rect x="5.6000000000000005" y="2.9000000000000004" width="1.2" height="1.2" fill="#9c9a98"/></svg>
<svg class="b" style="left:1641.8999999999999px;top:637.8px;" width="12.4" height="12.4" viewBox="0 0 12.4 12.4" fill="none"><circle cx="6.2" cy="6.2" r="5.6000000000000005" stroke="#9c9a98" stroke-width="1"/><rect x="5.65" y="5.0" width="1.1" height="3.8" fill="#9c9a98"/><rect x="5.6000000000000005" y="2.9000000000000004" width="1.2" height="1.2" fill="#9c9a98"/></svg>
<svg class="b" style="left:1641.8999999999999px;top:669.8px;" width="12.4" height="12.4" viewBox="0 0 12.4 12.4" fill="none"><circle cx="6.2" cy="6.2" r="5.6000000000000005" stroke="#9c9a98" stroke-width="1"/><rect x="5.65" y="5.0" width="1.1" height="3.8" fill="#9c9a98"/><rect x="5.6000000000000005" y="2.9000000000000004" width="1.2" height="1.2" fill="#9c9a98"/></svg>
<svg class="b" style="left:864.7px;top:513.6px;" width="12.6" height="6.8" viewBox="0 0 12.6 6.8" fill="none"><path d="M0.5 0.5 L6.30 6.20 L12.10 0.5" stroke="#d2d0ce" stroke-width="1.0"/></svg>
<svg class="b" style="left:888.8000000000001px;top:545.7px;" width="12.6" height="6.8" viewBox="0 0 12.6 6.8" fill="none"><path d="M0.5 0.5 L6.30 6.20 L12.10 0.5" stroke="#d2d0ce" stroke-width="1.0"/></svg>
<svg class="b" style="left:892px;top:506px;" width="18.2" height="18.2" viewBox="0 0 18.2 18.2" fill="none"><rect x="0" y="0" width="18.2" height="18.2" rx="2" fill="#2899f5"/><path d="M3.8 8.7 L7.6 11.9 L14.8 5" stroke="#1b1a19" stroke-width="1.15"/></svg>
<svg class="b" style="left:920px;top:538px;" width="18.2" height="18.2" viewBox="0 0 18.2 18.2" fill="none"><rect x="0" y="0" width="18.2" height="18.2" rx="2" fill="#2899f5"/><path d="M3.8 8.7 L7.6 11.9 L14.8 5" stroke="#1b1a19" stroke-width="1.15"/></svg>
<svg class="b" style="left:944px;top:570px;" width="18.2" height="18.2" viewBox="0 0 18.2 18.2" fill="none"><rect x="0" y="0" width="18.2" height="18.2" rx="2" fill="#2899f5"/><path d="M3.8 8.7 L7.6 11.9 L14.8 5" stroke="#1b1a19" stroke-width="1.15"/></svg>
<svg class="b" style="left:944px;top:602px;" width="18" height="18" viewBox="0 0 18 18" fill="none"><rect x="0.5" y="0.5" width="17" height="17" rx="1.5" stroke="#605e5c"/><path d="M3.8 8.7 L7.6 11.9 L14.8 5" stroke="#605e5c" stroke-width="1.1"/></svg>
<svg class="b" style="left:944px;top:634px;" width="18.2" height="18.2" viewBox="0 0 18.2 18.2" fill="none"><rect x="0" y="0" width="18.2" height="18.2" rx="2" fill="#2899f5"/><path d="M3.8 8.7 L7.6 11.9 L14.8 5" stroke="#1b1a19" stroke-width="1.15"/></svg>
<svg class="b" style="left:944px;top:666px;" width="18" height="18" viewBox="0 0 18 18" fill="none"><rect x="0.5" y="0.5" width="17" height="17" rx="1.5" stroke="#605e5c"/><path d="M3.8 8.7 L7.6 11.9 L14.8 5" stroke="#605e5c" stroke-width="1.1"/></svg>
<div class="b red" style="left:850px;top:493px;width:833.2px;height:218.2px;"></div>
<div id="tx">
<span class="t" id="t0" style="left:14.84px;top:6.15px;font-size:14px;color:#2496f8;transform:scaleX(1.0316);">Home</span>
<span class="t" id="t1" style="left:73.47px;top:6.15px;font-size:14px;color:#2496f8;transform:scaleX(0.9876);">Devices | Windows</span>
<span class="t" id="t2" style="left:211.30px;top:6.15px;font-size:14px;color:#2496f8;transform:scaleX(1.0103);">Windows | Configuration profiles</span>
<span class="t" id="t3" style="left:14.24px;top:34.68px;font-size:24px;color:#ffffff;transform:scaleX(0.9613);font-weight:700;-webkit-text-stroke:0;">Create profile</span>
<span class="t" id="t4" style="left:14.89px;top:65.14px;font-size:12px;color:#b8b5b2;transform:scaleX(1.0005);">Windows 10 and later - Settings catalog</span>
<span class="t" id="t5" style="left:49.19px;top:119.15px;font-size:14px;color:#ffffff;transform:scaleX(0.9274);">Basics</span>
<span class="t" id="t6" style="left:138.55px;top:119.15px;font-size:14px;color:#ffffff;transform:scaleX(0.9580);font-weight:700;-webkit-text-stroke:0;">Configuration settings</span>
<span class="t" id="t7" style="left:331.12px;top:119.15px;font-size:14px;color:#7a7876;transform:scaleX(0.9726);">Scope tags</span>
<span class="t" id="t8" style="left:452.27px;top:119.15px;font-size:14px;color:#7a7876;transform:scaleX(0.9785);">Assignments</span>
<span class="t" id="t9" style="left:582.44px;top:119.15px;font-size:14px;color:#7a7876;transform:scaleX(0.9818);">Review + create</span>
<span class="t" id="t10" style="left:118.01px;top:120.18px;font-size:9px;color:#0b2a45;transform:scaleX(1.1365);">2</span>
<span class="t" id="t11" style="left:310.81px;top:120.28px;font-size:9px;color:#8a8886;transform:scaleX(1.1935);font-weight:700;-webkit-text-stroke:0;">3</span>
<span class="t" id="t12" style="left:431.14px;top:120.28px;font-size:9px;color:#8a8886;transform:scaleX(1.1172);font-weight:700;-webkit-text-stroke:0;">4</span>
<span class="t" id="t13" style="left:561.89px;top:120.28px;font-size:9px;color:#8a8886;transform:scaleX(1.1932);font-weight:700;-webkit-text-stroke:0;">5</span>
<span class="t" id="t14" style="left:23.74px;top:170.00px;font-size:13px;color:#2496f8;transform:scaleX(1.0194);">+ Add settings</span>
<span class="t" id="t15" style="left:58.98px;top:217.15px;font-size:14px;color:#ffffff;transform:scaleX(1.0023);">Printer Provisioning</span>
<span class="t" id="t16" style="left:644.98px;top:217.15px;font-size:14px;color:#2496f8;transform:scaleX(0.9840);">Remove category</span>
<span class="t" id="t17" style="left:58.62px;top:254.26px;font-size:18px;color:#ffffff;transform:scaleX(0.9926);font-weight:700;-webkit-text-stroke:0;">Printer Shared ID (User)</span>
<span class="t" id="t18" style="left:91.85px;top:302.80px;font-size:13px;color:#ffffff;transform:scaleX(1.0074);">Add</span>
<span class="t" id="t19" style="left:155.10px;top:302.90px;font-size:13px;color:#7a7876;transform:scaleX(0.9924);">Delete</span>
<span class="t" id="t20" style="left:90.30px;top:332.10px;font-size:13px;color:#ffffff;transform:scaleX(0.9584);font-weight:700;-webkit-text-stroke:0;">Cloud Device ID</span>
<span class="t" id="t21" style="left:90.97px;top:349.00px;font-size:13px;color:#ffffff;transform:scaleX(0.9565);font-weight:700;-webkit-text-stroke:0;">(User)</span>
<span class="t" id="t22" style="left:245.64px;top:336.80px;font-size:13px;color:#ffffff;transform:scaleX(0.9484);font-weight:700;-webkit-text-stroke:0;">Install (User)</span>
<span class="t" id="t23" style="left:401.10px;top:332.20px;font-size:13px;color:#ffffff;transform:scaleX(0.9644);font-weight:700;-webkit-text-stroke:0;">Printer Shared Name</span>
<span class="t" id="t24" style="left:400.96px;top:349.00px;font-size:13px;color:#ffffff;transform:scaleX(0.9617);font-weight:700;-webkit-text-stroke:0;">(User)</span>
<span class="t" id="t25" style="left:554.13px;top:336.80px;font-size:13px;color:#ffffff;transform:scaleX(0.9577);font-weight:700;-webkit-text-stroke:0;">Shared ID (User)</span>
<span class="t" id="t26" style="left:254.81px;top:371.90px;font-size:13px;color:#ffffff;transform:scaleX(1.0334);">Install</span>
<span class="t" id="t27" style="left:254.81px;top:403.90px;font-size:13px;color:#ffffff;transform:scaleX(1.0334);">Install</span>
<span class="t" id="t28" style="left:254.81px;top:435.90px;font-size:13px;color:#ffffff;transform:scaleX(1.0334);">Install</span>
<span class="t" id="t29" style="left:409.60px;top:371.30px;font-size:13px;color:#ffffff;transform:scaleX(0.9816);">Canon c355i</span>
<span class="t" id="t30" style="left:408.90px;top:403.30px;font-size:13px;color:#ffffff;transform:scaleX(0.9668);">HP Printer E87640</span>
<span class="t" id="t31" style="left:35.04px;top:861.20px;font-size:13px;color:#2496f8;transform:scaleX(0.9367);font-weight:700;-webkit-text-stroke:0;">Previous</span>
<span class="t" id="t32" style="left:144.63px;top:861.20px;font-size:13px;color:#1b1a19;transform:scaleX(1.0433);">Next</span>
<span class="t" id="t33" style="left:854.99px;top:6.58px;font-size:24px;color:#ffffff;transform:scaleX(0.9390);font-weight:700;-webkit-text-stroke:0;">Settings picker</span>
<span class="t" id="t34" style="left:854.48px;top:36.94px;font-size:12px;color:#b8b5b2;transform:scaleX(0.9979);">Use commas "," among search terms to lookup settings by their keywords</span>
<span class="t" id="t35" style="left:879.54px;top:64.90px;font-size:13px;color:#ffffff;transform:scaleX(1.1191);">print</span>
<span class="t" id="t36" style="left:1605.00px;top:63.80px;font-size:13px;color:#1b1a19;transform:scaleX(0.9474);">Search</span>
<span class="t" id="t37" style="left:892.83px;top:99.00px;font-size:13px;color:#ffffff;transform:scaleX(1.0349);">Add filter</span>
<span class="t" id="t38" style="left:855.16px;top:125.90px;font-size:13px;color:#ffffff;transform:scaleX(0.9449);font-weight:700;-webkit-text-stroke:0;">Browse by category</span>
<span class="t" id="t39" style="left:875.11px;top:143.80px;font-size:13px;color:#ffffff;transform:scaleX(1.0081);">Microsoft Office 2016\Miscellaneous</span>
<span class="t" id="t40" style="left:875.11px;top:168.80px;font-size:13px;color:#ffffff;transform:scaleX(1.0045);">Microsoft Office 2016\Security Settings\Trust Center\Application Guard</span>
<span class="t" id="t41" style="left:875.11px;top:193.80px;font-size:13px;color:#ffffff;transform:scaleX(0.9998);">Microsoft PowerPoint 2016\PowerPoint Options\Advanced</span>
<span class="t" id="t42" style="left:875.11px;top:218.80px;font-size:13px;color:#ffffff;transform:scaleX(0.9990);">Microsoft Publisher 2016\Miscellaneous</span>
<span class="t" id="t43" style="left:875.11px;top:243.80px;font-size:13px;color:#ffffff;transform:scaleX(1.0038);">Microsoft Publisher 2016\Publisher Options\Advanced</span>
<span class="t" id="t44" style="left:875.11px;top:268.80px;font-size:13px;color:#ffffff;transform:scaleX(1.0090);">Microsoft Word 2016\Miscellaneous</span>
<span class="t" id="t45" style="left:875.11px;top:293.80px;font-size:13px;color:#ffffff;transform:scaleX(1.0196);">Microsoft Word 2016\Word Options\Advanced</span>
<span class="t" id="t46" style="left:875.11px;top:318.80px;font-size:13px;color:#ffffff;transform:scaleX(1.0200);">Microsoft Word 2016\Word Options\Display</span>
<span class="t" id="t47" style="left:875.11px;top:343.80px;font-size:13px;color:#ffffff;transform:scaleX(1.0164);">Microsoft Word 2016\Word Options\General</span>
<span class="t" id="t48" style="left:875.11px;top:368.80px;font-size:13px;color:#ffffff;transform:scaleX(1.0158);">Microsoft Word 2016\Word Options\Security</span>
<span class="t" id="t49" style="left:875.11px;top:393.80px;font-size:13px;color:#ffffff;transform:scaleX(1.0043);">Printer Provisioning</span>
<span class="t" id="t50" style="left:854.55px;top:447.00px;font-size:13px;color:#ffffff;transform:scaleX(0.9458);font-weight:700;-webkit-text-stroke:0;">6 results in the "Printer Provisioning" category</span>
<span class="t" id="t51" style="left:1511.17px;top:445.10px;font-size:13px;color:#1b1a19;transform:scaleX(1.0081);">Select all these settings</span>
<span class="t" id="t52" style="left:862.13px;top:475.20px;font-size:13px;color:#ffffff;transform:scaleX(0.9785);font-weight:700;-webkit-text-stroke:0;">Setting name</span>
<span class="t" id="t53" style="left:924.35px;top:509.00px;font-size:13px;color:#ffffff;transform:scaleX(0.9711);">Printer Shared ID (User)</span>
<span class="t" id="t54" style="left:952.35px;top:541.00px;font-size:13px;color:#ffffff;transform:scaleX(0.9711);">Printer Shared ID (User)</span>
<span class="t" id="t55" style="left:976.62px;top:573.00px;font-size:13px;color:#ffffff;transform:scaleX(0.9716);">Cloud Device ID (User)</span>
<span class="t" id="t56" style="left:975.95px;top:605.00px;font-size:13px;color:#ffffff;transform:scaleX(0.9872);">Install (User)</span>
<span class="t" id="t57" style="left:975.84px;top:637.00px;font-size:13px;color:#ffffff;transform:scaleX(0.9740);">Printer Shared Name (User)</span>
<span class="t" id="t58" style="left:976.79px;top:669.00px;font-size:13px;color:#ffffff;transform:scaleX(0.9621);">Shared ID (User)</span>
<div id="clip"><span id="clipt">MFC-L9550CDW Printer</span></div>
</div>
</body></html>
